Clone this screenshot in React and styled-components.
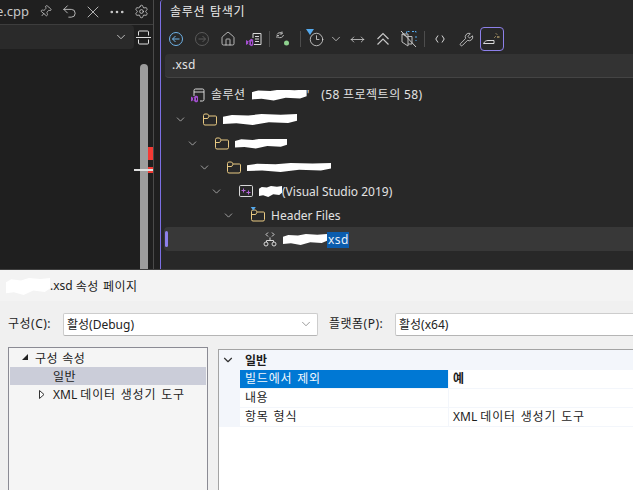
import React from "react";
import styled, { createGlobalStyle } from "styled-components";
import { Pin, Undo2, X, Ellipsis, Settings, ChevronDown, House, Wrench, MoveHorizontal, Clock3 } from "lucide-react";

const Global = createGlobalStyle`
  html, body { margin: 0; padding: 0; background: #1f1f1f; }
  * { box-sizing: border-box; }
  body { font-family: "Noto Sans", "Noto Sans CJK KR", sans-serif; font-size: 12px; }
`;

const Page = styled.div`
  width: 633px; height: 490px; overflow: hidden;
  display: flex; flex-direction: column;
`;
const Top = styled.div`
  height: 270px; display: flex; background: #1f1f1f;
  border-bottom: 1px solid #3f3f3f;
`;
const Ko = styled.span`
  letter-spacing: ${p => (p.$wide ? 0.8 : 0.5)}px; word-spacing: ${p => (p.$wide ? 1 : 0.5)}px;
`;

/* editor */
const Editor = styled.div`
  width: 154px; border-right: 1px solid #4a4a4a;
  display: flex; flex-direction: column; color: #cfcfcf;
`;
const EditorBar = styled.div`
  height: 25px; border-bottom: 1px solid #3d3d3d; flex: none;
  display: flex; align-items: center; justify-content: flex-end;
  padding-bottom: 1px; overflow: hidden; position: relative;
`;
const FileName = styled.span`
  font-size: 13px; color: #c8c8c8; position: absolute; left: -4px; top: 2px;
`;
const BarIcon = styled.span`
  width: 24px; height: 20px; display: flex; align-items: center; justify-content: center; color: #d0d0d0;
`;
const ComboRow = styled.div`
  height: 24px; flex: none; display: flex; align-items: center;
`;
const Combo = styled.div`
  width: 134px; height: 24px; background: #2a2a2a; border-radius: 0 4px 4px 0;
  display: flex; align-items: center; justify-content: flex-end; padding-right: 6px; color: #d0d0d0;
`;
const SplitBtn = styled.span`
  width: 19px; height: 20px; display: flex; align-items: center; justify-content: center;
`;
const EditorBody = styled.div`
  flex: 1; position: relative; padding: 15px 0 0 140px; min-height: 0;
`;
const ScrollThumb = styled.div`
  width: 8px; height: 100%; background: #9d9d9d; border-radius: 4px 4px 0 0;
`;
const Mark = styled.div`
  position: absolute; left: 148px; width: 5px; background: #f33a34;
  top: ${p => p.$top}px; height: ${p => p.$h}px;
`;
const Caret = styled.div`
  position: absolute; left: 134px; width: 19px; height: 2px; top: 120px; background: #dedede;
`;
const Gutter = styled.div`
  width: 6px; background: #1f1f1f;
`;

/* solution explorer */
const Panel = styled.div`
  flex: 1; min-width: 0; background: #282828; border-left: 1px solid #7c6fe3; border-top-left-radius: 3px;
  display: flex; flex-direction: column; color: #e2e2e2;
`;
const PanelTitle = styled.div`
  height: 25px; flex: none; padding: 4px 0 0 9px; font-size: 12px; line-height: 16px; letter-spacing: 0.7px; word-spacing: 1px; color: #ececec;
`;
const Tools = styled.div`
  height: 28px; flex: none; display: flex; align-items: center; gap: 2px; padding: 0 0 0 3px; margin-bottom: 1px;
`;
const Tool = styled.span`
  width: ${p => p.$w || 24}px; height: 24px; flex: none; display: flex; align-items: center; justify-content: center;
  border-radius: 4px; color: #d8d8d8;
  margin-left: ${p => p.$ml || 0}px;
  border: ${p => (p.$active ? "1px solid #8d80ea" : "none")};
`;
const Sep = styled.span`
  width: 1px; height: 16px; background: #4d4d4d; flex: none;
  margin: 0 ${p => p.$r}px 0 ${p => p.$l}px;
`;
const Search = styled.div`
  height: 24px; flex: none; margin: 0 0 5px 4px; padding-left: 7px;
  background: #333333; border-bottom: 1px solid #444; border-radius: 4px 0 0 4px;
  font-size: 12px; letter-spacing: 0.2px; line-height: 21px; color: #e4e4e4;
`;
const Tree = styled.div`
  display: flex; flex-direction: column;
`;
const Row = styled.div`
  height: 24px; flex: none; display: flex; align-items: center; position: relative; white-space: nowrap;
  padding-left: ${p => 11 + 12 * p.$level}px;
  margin-left: ${p => (p.$selected ? 3 : 0)}px;
  ${p => p.$selected && `background: #383838; border-radius: 4px 0 0 4px; padding-left: ${8 + 12 * p.$level}px;`}
`;
const SolutionRow = styled(Row)`
  padding-left: 29px;
`;
const Chevron = styled.span`
  width: 16px; height: 16px; flex: none; display: flex; align-items: center; justify-content: center; color: #c4c4c4;
`;
const ItemIcon = styled.span`
  width: 16px; height: 16px; flex: none; margin: 0 5px 0 14px; display: flex;
`;
const SolutionGlyph = styled(ItemIcon)`
  margin: 0 5px 0 0;
`;
const Label = styled.span`
  font-size: 12px; line-height: 16px; color: #e2e2e2; display: inline-flex; align-items: center;
  padding-top: ${p => (p.$flush ? 0 : 1)}px;
`;
const Counter = styled.span`
  margin-left: 12px; letter-spacing: 0.3px;
`;
const Accent = styled.span`
  position: absolute; left: 1px; top: 4px; width: 3px; height: 16px; border-radius: 2px; background: #8d80ea;
`;
const Match = styled.span`
  background: #0b5cad; color: #e8f0fa; padding: 0 0 0 1px; height: 16px; line-height: 15px; letter-spacing: 0.5px; display: inline-block;
`;
const Blot = styled.span`
  display: inline-block; flex: none; background: ${p => p.$bg || "#fff"};
  width: ${p => p.$w}px; height: ${p => p.$h}px; margin-top: ${p => p.$mt || 0}px; margin-left: ${p => p.$ml || 0}px;
  clip-path: polygon(0 25%, 12% 8%, 34% 14%, 52% 0, 78% 6%, 100% 0, 100% 62%, 88% 82%, 62% 74%, 40% 100%, 18% 84%, 0 90%);
`;

/* dialog */
const Dialog = styled.div`
  flex: 1; min-height: 0; background: #f0f0f0; display: flex; flex-direction: column; color: #1c1c1c;
`;
const TitleBar = styled.div`
  height: 31px; flex: none; background: #f3f3f3; display: flex; align-items: center; padding-left: 6px;
  font-size: 12px;
`;
const ConfigBar = styled.div`
  height: 46px; flex: none; display: flex; align-items: flex-start; padding: 12px 0 0 8px;
`;
const FieldLabel = styled.span`
  line-height: 21px; width: ${p => p.$w}px; flex: none; font-size: 12px; letter-spacing: 0.5px;
`;
const Select = styled.div`
  height: 23px; width: ${p => p.$w}px; flex: none; background: #fff; border: 1px solid #cdcdcd; border-radius: 2px;
  border-bottom-color: #b5b5b5; margin-right: ${p => p.$mr || 0}px; padding-bottom: 1px;
  display: flex; align-items: center; justify-content: space-between; padding-left: 3px; padding-right: 4px; font-size: 12px; color: #222;
`;
const Main = styled.div`
  flex: 1; min-height: 0; display: flex; padding-left: 8px;
`;
const NavTree = styled.div`
  width: 200px; background: #f5f5f5; border: 1px solid #8b8b94; border-bottom: 0; padding: 1px;
  margin-right: 10px; flex: none;
`;
const NavRow = styled.div`
  height: 18px; display: flex; align-items: center; white-space: pre; font-size: 12px; position: relative;
  padding-left: ${p => p.$pad}px;
  background: ${p => (p.$selected ? "#cbcdd9" : "transparent")};
`;
const Tri = styled.svg`
  position: absolute; left: ${p => p.$left}px; top: 5px;
`;
const Grid = styled.div`
  flex: 1; margin-top: 2px; background: #fff; border-top: 1px solid #a3a3a3; border-left: 1px solid #a3a3a3; min-width: 0;
`;
const GridHeader = styled.div`
  height: 20px; background: #f3f6fb; display: flex; align-items: center; font-weight: 700; font-size: 12px;
`;
const HeaderChevron = styled.span`
  width: 18px; margin-right: 8px; flex: none; display: flex; justify-content: center;
`;
const GridRow = styled.div`
  height: 19px; display: flex; padding-left: 21px; background: linear-gradient(to right, #f3f6fb 21px, #fff 21px);
`;
const KeyCell = styled.div`
  width: 208px; flex: none; height: 18px; line-height: 17px; padding-left: 5px; font-size: 12px;
  background: ${p => (p.$selected ? "#0078d4" : "#fff")};
  color: ${p => (p.$selected ? "#f2f7fc" : "#1c1c1c")};
  box-shadow: 0 1px 0 #f3f6fb;
`;
const ValueCell = styled.div`
  flex: 1; height: 18px; line-height: 17px; padding-left: 4px; font-size: 12px;
  border-left: 1px solid #f3f6fb; box-shadow: 0 1px 0 #f3f6fb;
  font-weight: ${p => (p.$bold ? 700 : 400)};
`;
const HistoryWrap = styled.span`
  position: relative; display: flex;
`;
const HistoryFilter = styled.svg`
  position: absolute; left: -3px; top: -3px;
`;

const FolderIcon = ({ filtered }) => (
  <svg width="16" height="16" viewBox="0 0 16 16" fill="none">
    <path d="M1.500 4.500a1.500 1.500 0 0 1 1.500-1.500h2.600l1.600 2h6.300a1 1 0 0 1 1 1v6.500a1.500 1.500 0 0 1-1.500 1.500H3a1.500 1.500 0 0 1-1.500-1.500z" stroke="#e8c982" strokeWidth="1" />
    <path d="M1.500 7.500h4.200l1.500-2.500" stroke="#e8c982" strokeWidth="1" />
    {filtered && <path d="M0 0h6.500L3.300 4.500z" fill="#55aaee" transform="translate(0 -1)" />}
  </svg>
);
const SolutionIcon = () => (
  <svg width="16" height="16" viewBox="0 0 16 16" fill="none">
    <path d="M4 9V3.500A1.500 1.500 0 0 1 5.500 2h7A1.500 1.500 0 0 1 14 3.500v9a1.500 1.500 0 0 1-1.500 1.500H10M4 5h10" stroke="#d8d8d8" />
    <path d="M1 9.500l2 1.300 3-2.300 2 1v5l-2 1-3-2.300-2 1.300z" fill="#a44fd0" />
    <rect x="3" y="10.500" width="1.200" height="3" fill="#282828" /><rect x="6" y="10.800" width="1" height="2.600" fill="#282828" />
  </svg>
);
const ProjectIcon = () => (
  <svg width="16" height="16" viewBox="0 0 16 16" fill="none">
    <rect x="1.500" y="2.500" width="13" height="11" rx="1.200" stroke="#d8d8d8" />
    <path d="M3.500 7.500h4M5.500 5.500v4M8.500 9.500h4M10.500 7.500v4" stroke="#b565d8" />
  </svg>
);
const XsdIcon = () => (
  <svg width="16" height="16" viewBox="0 0 16 16" fill="none" stroke="#d8d8d8">
    <path d="M6 1.500L4 3.500l2 2M10 1.500l2 2-2 2" />
    <path d="M8 6.500v3M4.500 11V9.500h7V11" />
    <circle cx="4" cy="13" r="2" /><circle cx="12" cy="13" r="2" />
  </svg>
);
const CircleArrow = ({ color, dim }) => (
  <svg width="16" height="16" viewBox="0 0 16 16" fill="none" stroke={color}>
    <circle cx="8" cy="8" r="6.500" />
    {dim ? <path d="M4.500 8h7M8.500 5l3 3-3 3" /> : <path d="M11.500 8h-7M7.500 5l-3 3 3 3" />}
  </svg>
);
const SolutionSmall = () => (
  <svg width="18" height="16" viewBox="0 0 18 16" fill="none">
    <path d="M8 2.500h8v11H9M8 2.500V7M10 5.500h4M10 8h4M10 10.500h4" stroke="#d8d8d8" />
    <path d="M1 9l2.200 1.300 3-2.500 2 1v5.500l-2 1-3-2.500L1 14z" fill="#a44fd0" />
    <rect x="3.200" y="10.500" width="1.200" height="2.500" fill="#282828" /><rect x="6" y="10.500" width="1" height="2.800" fill="#282828" />
  </svg>
);
const SyncIcon = () => (
  <svg width="18" height="18" viewBox="0 0 18 18" fill="none">
    <path d="M3 4.500a3.500 3.500 0 0 1 5.500-1M9.500 5a3.500 3.500 0 0 1-5.500 2" stroke="#b8b8b8" />
    <path d="M8 1.500v2.500h-2.500M3 8V5.500h2" stroke="#b8b8b8" />
    <circle cx="12.500" cy="13" r="2.500" fill="#8fd28f" />
  </svg>
);
const HistoryIcon = () => (
  <HistoryWrap>
    <Clock3 size={15} strokeWidth={1.3} />
    <HistoryFilter width="8" height="6" viewBox="0 0 8 6">
      <path d="M0 0h8L4 6z" fill="#55aaee" />
    </HistoryFilter>
  </HistoryWrap>
);
const DoubleUp = () => (
  <svg width="14" height="14" viewBox="0 0 14 14" fill="none" stroke="#c8c8c8" strokeWidth="1.200">
    <path d="M1.500 7L7 1.500 12.500 7M1.500 12.500L7 7l5.500 5.500" />
  </svg>
);
const CodeIcon = () => (
  <svg width="10" height="8" viewBox="0 0 10 8" fill="none" stroke="#d8d8d8">
    <path d="M3 .5L.8 4 3 7.500M7 .5L9.200 4 7 7.500" />
  </svg>
);
const NoFilesIcon = () => (
  <svg width="18" height="18" viewBox="0 0 18 18" fill="none">
    <path d="M7.500 1.500h2M12 1.500h2l2 0v2M16 6v2M16 10v1M6.500 3.500V1.500M10 6.500h3" stroke="#55aaee" strokeDasharray="2 1" />
    <path d="M2 4h6v2.500h4V14H8" stroke="#bdbdbd" /><path d="M2 4v8l6 4V7z" stroke="#bdbdbd" />
    <path d="M1 1l15 16" stroke="#c8c8c8" />
  </svg>
);
const BroomIcon = () => (
  <svg width="20" height="16" viewBox="0 0 20 16" fill="none">
    <path d="M1.500 12.500h10.500V9.500H6c-2 0-3.500 1-4.500 3z" stroke="#d8d8d8" />
    <path d="M15 6h2.500M14 2.500l1 1M12.500 6.500l1 -1" stroke="#e8c982" />
  </svg>
);
const SplitIcon = () => (
  <svg width="15" height="15" viewBox="0 0 15 15" fill="none" stroke="#e0e0e0">
    <path d="M2.500 5.500V2a1 1 0 0 1 1-1h8a1 1 0 0 1 1 1v3.500M2.500 9.500V13a1 1 0 0 0 1 1h8a1 1 0 0 0 1-1V9.500M0 7.500h15" />
  </svg>
);

const TreeItem = ({ level, icon, children, selected, chevron = true }) => (
  <Row $level={level} $selected={selected}>
    {selected && <Accent />}
    <Chevron>{chevron && <ChevronDown size={13} strokeWidth={1.4} />}</Chevron>
    <ItemIcon>{icon}</ItemIcon>
    <Label>{children}</Label>
  </Row>
);

const big = { size: 15, strokeWidth: 1.3 };

export default function App() {
  return (
    <Page>
      <Global />
      <Top>
        <Editor>
          <EditorBar>
            <FileName>e.cpp</FileName>
            <BarIcon><Pin size={13} strokeWidth={1.3} style={{ transform: "rotate(40deg)" }} /></BarIcon>
            <BarIcon><Undo2 size={17} strokeWidth={1.2} /></BarIcon>
            <BarIcon><X size={20} strokeWidth={1} /></BarIcon>
            <BarIcon><Ellipsis size={18} strokeWidth={1.5} /></BarIcon>
            <BarIcon><Settings {...big} /></BarIcon>
          </EditorBar>
          <ComboRow>
            <Combo><ChevronDown size={14} strokeWidth={1.5} /></Combo>
            <SplitBtn><SplitIcon /></SplitBtn>
          </ComboRow>
          <EditorBody>
            <ScrollThumb />
            <Mark $top={98} $h={13} />
            <Mark $top={118} $h={6} />
            <Caret />
          </EditorBody>
        </Editor>
        <Gutter />
        <Panel>
          <PanelTitle>솔루션 탐색기</PanelTitle>
          <Tools>
            <Tool><CircleArrow color="#6fb3e8" /></Tool>
            <Tool><CircleArrow color="#5a5a5a" dim /></Tool>
            <Tool><House size={16} strokeWidth={1.2} /></Tool>
            <Tool><SolutionSmall /></Tool>
            <Sep $l={1} $r={-1} />
            <Tool><SyncIcon /></Tool>
            <Sep $l={3} $r={1} />
            <Tool><HistoryIcon /></Tool>
            <Tool $w={14} $ml={-1}><ChevronDown size={14} strokeWidth={1.3} /></Tool>
            <Tool><MoveHorizontal size={15} strokeWidth={1.2} /></Tool>
            <Tool><DoubleUp /></Tool>
            <Tool><NoFilesIcon /></Tool>
            <Sep $l={1} $r={1} />
            <Tool><CodeIcon /></Tool>
            <Tool><Wrench {...big} /></Tool>
            <Tool $active><BroomIcon /></Tool>
          </Tools>
          <Search>.xsd</Search>
          <Tree>
            <SolutionRow $level={1}>
              <SolutionGlyph><SolutionIcon /></SolutionGlyph>
              <Label $flush><Ko>솔루션</Ko><Blot $w={55} $h={11} $ml={6} />'<Counter>(58 <Ko>프로젝트의</Ko> 58)</Counter></Label>
            </SolutionRow>
            <TreeItem level={0} icon={<FolderIcon />}><Blot $w={74} $h={11} /></TreeItem>
            <TreeItem level={1} icon={<FolderIcon />}><Blot $w={52} $h={10} /></TreeItem>
            <TreeItem level={2} icon={<FolderIcon />}><Blot $w={84} $h={9} /></TreeItem>
            <TreeItem level={3} icon={<ProjectIcon />}><Blot $w={23} $h={11} />(Visual Studio 2019)</TreeItem>
            <TreeItem level={4} icon={<FolderIcon filtered />}>Header Files</TreeItem>
            <TreeItem level={5} selected chevron={false} icon={<XsdIcon />}><Blot $w={44} $h={11} /><Match>xsd</Match></TreeItem>
          </Tree>
        </Panel>
      </Top>
      <Dialog>
        <TitleBar><Blot $w={44} $h={17} $mt={2} />.xsd&nbsp;<Ko>속성 페이지</Ko></TitleBar>
        <ConfigBar>
          <FieldLabel $w={55}>구성(C):</FieldLabel>
          <Select $w={255} $mr={11}>활성(Debug)<ChevronDown size={14} strokeWidth={1} color="#555" /></Select>
          <FieldLabel $w={66}>플랫폼(P):</FieldLabel>
          <Select $w={260}>활성(x64)</Select>
        </ConfigBar>
        <Main>
          <NavTree>
            <NavRow $pad={25}>
              <Tri $left={12} width="7" height="7" viewBox="0 0 7 7"><path d="M6 0v6H0z" fill="#222" /></Tri>
              <Ko>구성 속성</Ko>
            </NavRow>
            <NavRow $pad={43} $selected><Ko>일반</Ko></NavRow>
            <NavRow $pad={43}>
              <Tri $left={29} width="6" height="9" viewBox="0 0 6 9"><path d="M.5.500l4.500 4-4.500 4z" fill="#fff" stroke="#333" /></Tri>
              XML <Ko $wide>데이터 생성기 도구</Ko>
            </NavRow>
          </NavTree>
          <Grid>
            <GridHeader>
              <HeaderChevron><ChevronDown size={14} strokeWidth={2} color="#333" /></HeaderChevron>
              일반
            </GridHeader>
            <GridRow><KeyCell $selected><Ko $wide>빌드에서 제외</Ko></KeyCell><ValueCell $bold>예</ValueCell></GridRow>
            <GridRow><KeyCell><Ko>내용</Ko></KeyCell><ValueCell /></GridRow>
            <GridRow><KeyCell><Ko $wide>항목 형식</Ko></KeyCell><ValueCell>XML <Ko $wide>데이터 생성기 도구</Ko></ValueCell></GridRow>
          </Grid>
        </Main>
      </Dialog>
    </Page>
  );
}
